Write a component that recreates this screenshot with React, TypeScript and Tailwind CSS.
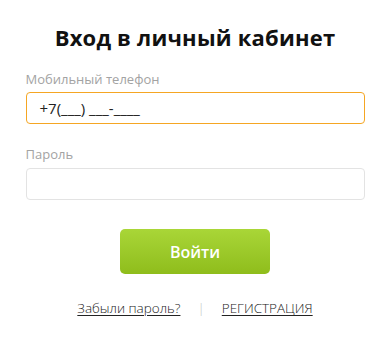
export default function App() {
  return (
    <div
      className="w-[390px] h-[340px] bg-white flex flex-col items-center"
      style={{ fontFamily: '"Open Sans", "Noto Sans", sans-serif' }}
    >
      <h1 className="mt-[20px] text-[22px] leading-[34px] font-bold text-[#111] tracking-[0.2px]">
        Вход в личный кабинет
      </h1>

      <form className="w-[339px] mt-[16px] flex flex-col">
        <label className="text-[13px] leading-[18px] text-[#a3a3a3]">
          Мобильный телефон
        </label>
        <div className="mt-[4px] h-[32px] border border-[#f5a623] rounded-[4px] flex items-center pl-[13px] text-[15px] text-[#222]">
          +7(___) ___-____
        </div>

        <label className="mt-[21px] text-[13px] leading-[18px] text-[#a3a3a3]">
          Пароль
        </label>
        <div className="mt-[5px] h-[32px] border border-[#e3e3e3] rounded-[4px]" />

        <div className="mt-[29px] flex justify-center">
          <button
            type="button"
            className="w-[150px] h-[45px] rounded-[5px] bg-gradient-to-b from-[#a9d637] to-[#8fbd1b] text-white font-semibold text-[16px]"
          >
            Войти
          </button>
        </div>
      </form>

      <div className="mt-[24px] flex items-center text-[13.5px] text-[#222]">
        <a className="underline underline-offset-2 font-light">Забыли пароль?</a>
        <span className="mx-[17px] text-[#c4c4c4] font-light">|</span>
        <a className="underline underline-offset-2 font-light">РЕГИСТРАЦИЯ</a>
      </div>
    </div>
  );
}
